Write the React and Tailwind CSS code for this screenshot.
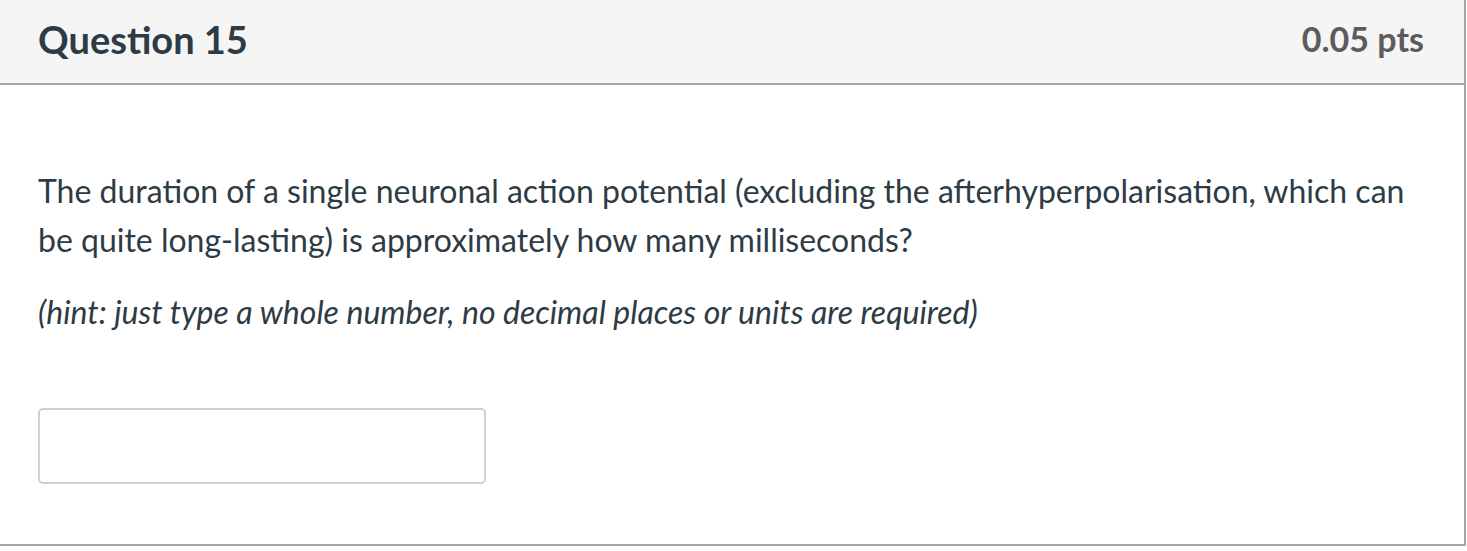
export default function App() {
  return (
    <div className="w-[1467px] h-[551px] bg-white font-['Lato',sans-serif] text-[#2d3b45]">
      <div className="w-[1466px] border-r-2 border-b-2 border-[#a5a5a5]">
        <div className="h-[85px] bg-[#f5f5f5] border-b-2 border-[#a5a5a5] flex items-center justify-between pl-[38px] pr-[40px] pb-[5px]">
          <h2 className="text-[38px] font-bold leading-none">Question 15</h2>
          <div className="text-[34px] font-bold text-[#5c5c5c] leading-none">0.05 pts</div>
        </div>
        <div className="pl-[38px] pr-[40px] pt-[81px] pb-[60px]">
          <p className="text-[32px] leading-[49px]">
            The duration of a single neuronal action potential (excluding the afterhyperpolarisation, which can be quite long-lasting) is approximately how many milliseconds?
          </p>
          <p className="text-[32px] leading-[49px] italic mt-[23px]">
            (hint: just type a whole number, no decimal places or units are required)
          </p>
          <input
            type="text"
            className="mt-[72px] block w-[448px] h-[76px] border-2 border-[#cfcfcf] rounded-[5px] bg-white"
          />
        </div>
      </div>
    </div>
  );
}
